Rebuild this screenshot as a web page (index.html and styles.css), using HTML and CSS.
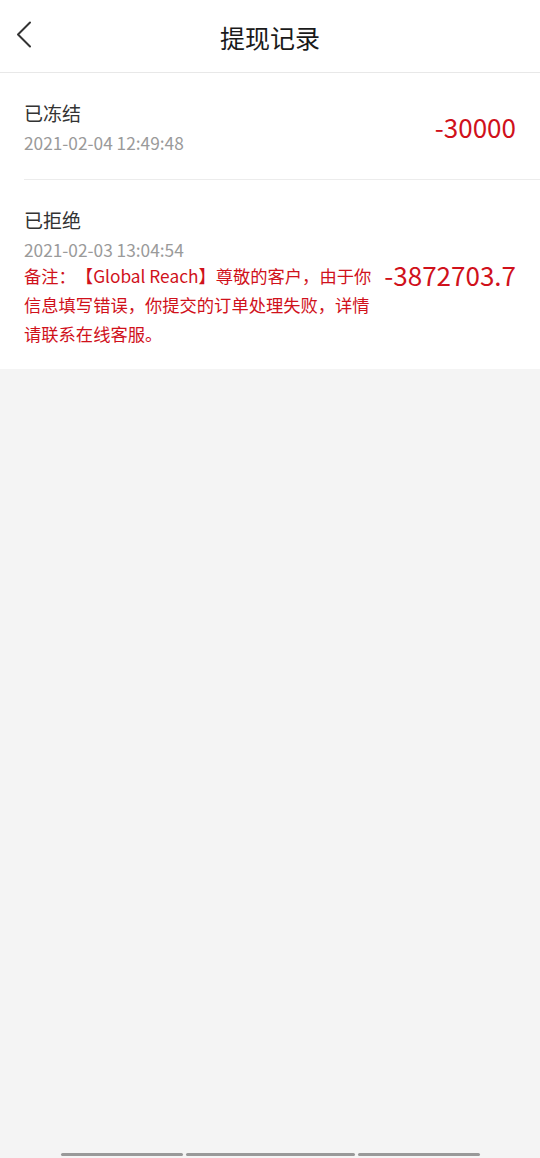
FILE: index.html
```html
<!DOCTYPE html>
<html lang="zh-CN">
<head>
<meta charset="utf-8">
<title>提现记录</title>
<link rel="stylesheet" href="styles.css">
</head>
<body>
<div class="app">
  <header class="header">
    <div class="back">
      <svg width="16" height="27" viewBox="0 0 16 27" fill="none" stroke="#333" stroke-width="2" stroke-linecap="round" stroke-linejoin="round"><path d="M14 1.5 L2 13.5 L14 25.5"/></svg>
    </div>
    <h1 class="title">提现记录</h1>
    <div class="side"></div>
  </header>
  <main class="list">
    <div class="item">
      <div class="info">
        <div class="status">已冻结</div>
        <div class="date">2021-02-04 12:49:48</div>
      </div>
      <div class="amount">-30000</div>
    </div>
    <div class="item">
      <div class="info">
        <div class="status">已拒绝</div>
        <div class="date">2021-02-03 13:04:54</div>
        <div class="note">备注：【Global Reach】尊敬的客户，由于你信息填写错误，你提交的订单处理失败，详情请联系在线客服。</div>
      </div>
      <div class="amount">-3872703.7</div>
    </div>
  </main>
  <div class="fill"></div>
  <div class="navbar">
    <span class="seg short"></span>
    <span class="seg long"></span>
    <span class="seg short"></span>
  </div>
</div>
</body>
</html>
```

FILE: styles.css
```css
* { box-sizing: border-box; }
html, body { margin: 0; padding: 0; }
body {
  background: #f4f4f4;
  font-family: "Noto Sans CJK SC", "Noto Sans", sans-serif;
  color: #333;
  text-spacing-trim: space-all;
}
.app {
  display: flex;
  flex-direction: column;
  min-height: 1158px;
}
.header {
  height: 73px;
  background: #fff;
  border-bottom: 1px solid #e8e8e8;
  display: grid;
  grid-template-columns: 60px 1fr 60px;
  align-items: center;
}
.back {
  display: flex;
  align-items: center;
  padding-left: 16px;
  padding-bottom: 3px;
}
.title {
  margin: 0;
  text-align: center;
  font-size: 25px;
  font-weight: 400;
  color: #1a1a1a;
  line-height: 1;
  padding-top: 2px;
}
.list {
  background: #fff;
  padding-left: 24px;
}
.item {
  display: flex;
  align-items: center;
  padding: 26px 24px 25px 0;
  border-bottom: 1px solid #ececec;
}
.item:last-child { border-bottom: none; }
.info {
  flex: 1;
  min-width: 0;
}
.status {
  font-size: 19px;
  line-height: 28px;
  color: #333;
}
.date {
  margin-top: 5px;
  font-size: 17.3px;
  line-height: 22px;
  color: #9a9a9a;
}
.note {
  font-size: 17.3px;
  line-height: 29px;
  color: #d0111b;
  margin-bottom: -4px;
  max-width: 352px;
}
.amount {
  flex: none;
  margin-left: 10px;
  font-size: 26px;
  line-height: 1;
  color: #d0111b;
}
.fill { flex: 1; }
.navbar {
  display: flex;
  justify-content: center;
  gap: 3px;
  padding-bottom: 2px;
}
.seg {
  height: 3px;
  border-radius: 2px;
  background: #999;
}
.seg.short { width: 122px; }
.seg.long { width: 169px; }
```
